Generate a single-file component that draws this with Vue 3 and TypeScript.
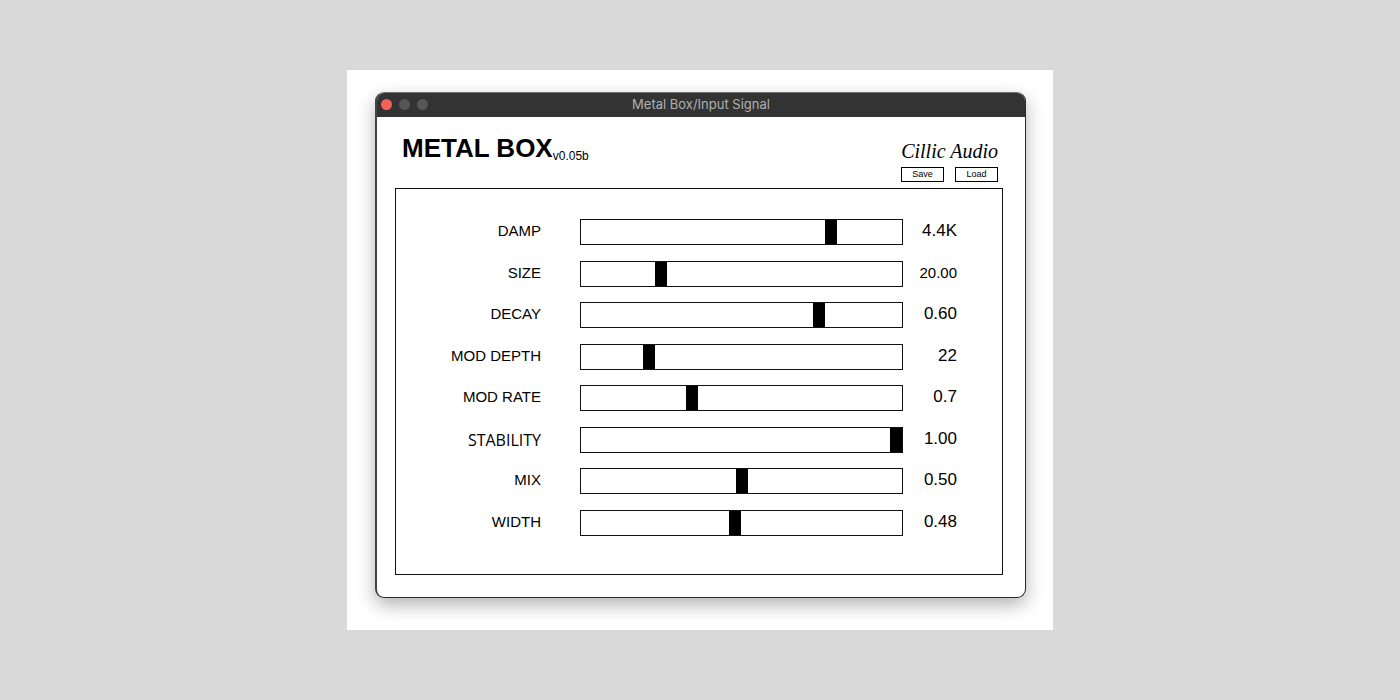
<script setup lang="ts">
import { ref } from 'vue'

interface Param {
  id: string
  label: string
  position: number
  display: string
  variant?: string
}

const params = ref<Param[]>([
  { id: 'damp', label: 'DAMP', position: 79, display: '4.4K' },
  { id: 'size', label: 'SIZE', position: 24, display: '20.00', variant: 'compact' },
  { id: 'decay', label: 'DECAY', position: 75, display: '0.60' },
  { id: 'mod-depth', label: 'MOD DEPTH', position: 20, display: '22' },
  { id: 'mod-rate', label: 'MOD RATE', position: 34, display: '0.7' },
  { id: 'stability', label: 'STABILITY', position: 100, display: '1.00', variant: 'humanist' },
  { id: 'mix', label: 'MIX', position: 50, display: '0.50' },
  { id: 'width', label: 'WIDTH', position: 48, display: '0.48' },
])
</script>

<template>
  <main class="stage">
    <div class="card">
      <section class="window">
        <div class="titlebar">
          <div class="lights">
            <button class="light close" type="button" aria-label="Close"></button>
            <button class="light" type="button" aria-label="Minimize"></button>
            <button class="light" type="button" aria-label="Zoom"></button>
          </div>
          <span class="title">Metal Box/Input Signal</span>
        </div>
        <div class="body">
          <header class="header">
            <div class="product">
              <h1 class="name">METAL BOX</h1>
              <span class="version">v0.05b</span>
            </div>
            <div class="side">
              <span class="brand">Cillic Audio</span>
              <div class="actions">
                <button class="action" type="button">Save</button>
                <button class="action" type="button">Load</button>
              </div>
            </div>
          </header>
          <div class="panel">
            <div v-for="p in params" :key="p.id" class="row" :class="p.variant">
              <label class="label" :for="p.id">{{ p.label }}</label>
              <input :id="p.id" v-model.number="p.position" class="slider" type="range" min="0" max="100" />
              <output class="value" :for="p.id">{{ p.display }}</output>
            </div>
          </div>
        </div>
      </section>
    </div>
  </main>
</template>

<style>
body {
  margin: 0;
  background: #d9d9d9;
}
</style>

<style scoped>
.stage {
  box-sizing: border-box;
  min-height: 100vh;
  display: flex;
  align-items: center;
  justify-content: center;
  font-family: "Liberation Sans", Arial, sans-serif;
  color: #000;
}
.card {
  box-sizing: border-box;
  width: 100%;
  max-width: 706px;
  padding: 22px 27px 32px 28px;
  background: #fff;
  overflow: hidden;
}
.window {
  border: 1px solid #2b2b2b;
  border-left: 2px solid #444;
  border-top-color: #707070;
  border-radius: 9px;
  background: #fff;
  box-shadow: 0 7px 18px rgba(0, 0, 0, 0.3);
  overflow: hidden;
}
.titlebar {
  box-sizing: border-box;
  display: grid;
  grid-template-columns: 1fr auto 1fr;
  align-items: center;
  height: 24px;
  padding-bottom: 2px;
  background: #333;
}
.lights {
  display: flex;
  gap: 7px;
  padding-left: 4px;
}
.light {
  width: 11px;
  height: 11px;
  padding: 0;
  border: 0;
  border-radius: 50%;
  background: #565656;
}
.close {
  background: #f4625a;
}
.title {
  font: 13px/22px Inter, sans-serif;
  color: #b0b0b0;
}
.body {
  padding: 0 22px 22px 18px;
}
.header {
  display: flex;
  justify-content: space-between;
  padding: 16px 5px 6px 7px;
}
.product {
  display: flex;
  align-items: flex-start;
}
.name {
  margin: 0;
  font-size: 26px;
  line-height: 30px;
  font-weight: 700;
}
.version {
  padding-top: 15px;
  font-size: 12px;
  line-height: 16px;
}
.side {
  display: flex;
  flex-direction: column;
  align-items: flex-end;
  gap: 4px;
  padding-top: 6px;
}
.brand {
  font: italic 20px/24px "Liberation Serif", "Times New Roman", serif;
}
.actions {
  display: flex;
  gap: 11px;
}
.action {
  box-sizing: border-box;
  width: 43px;
  height: 15px;
  padding: 0 0 1px;
  border: 1px solid #000;
  border-radius: 0;
  background: #fff;
  color: #000;
  font: 9px/12px "Liberation Sans", Arial, sans-serif;
}
.panel {
  box-sizing: border-box;
  min-height: 387px;
  padding: 30px 45px 38px 0;
  border: 1px solid #111;
  display: flex;
  flex-direction: column;
  justify-content: space-between;
}
.row {
  display: grid;
  grid-template-columns: 145px minmax(0, 1fr) 54px;
  align-items: center;
}
.label {
  font-size: 15px;
  line-height: 20px;
  padding-bottom: 2px;
  text-align: right;
}
.value {
  font-size: 17px;
  line-height: 20px;
  padding-bottom: 2px;
  text-align: right;
}
.compact .value {
  font-size: 15px;
}
.humanist .label {
  font-family: "Open Sans", sans-serif;
  font-size: 16px;
  font-weight: 500;
  padding-bottom: 0;
}
.slider {
  -webkit-appearance: none;
  appearance: none;
  box-sizing: border-box;
  width: auto;
  min-width: 0;
  height: 26px;
  margin: 0 0 0 39px;
  padding: 0;
  border: 1px solid #111;
  background: #fff;
}
.slider::-webkit-slider-thumb {
  -webkit-appearance: none;
  width: 12px;
  height: 24px;
  border: 0;
  border-radius: 0;
  background: #000;
}
.slider::-moz-range-thumb {
  width: 12px;
  height: 24px;
  border: 0;
  border-radius: 0;
  background: #000;
}
</style>
